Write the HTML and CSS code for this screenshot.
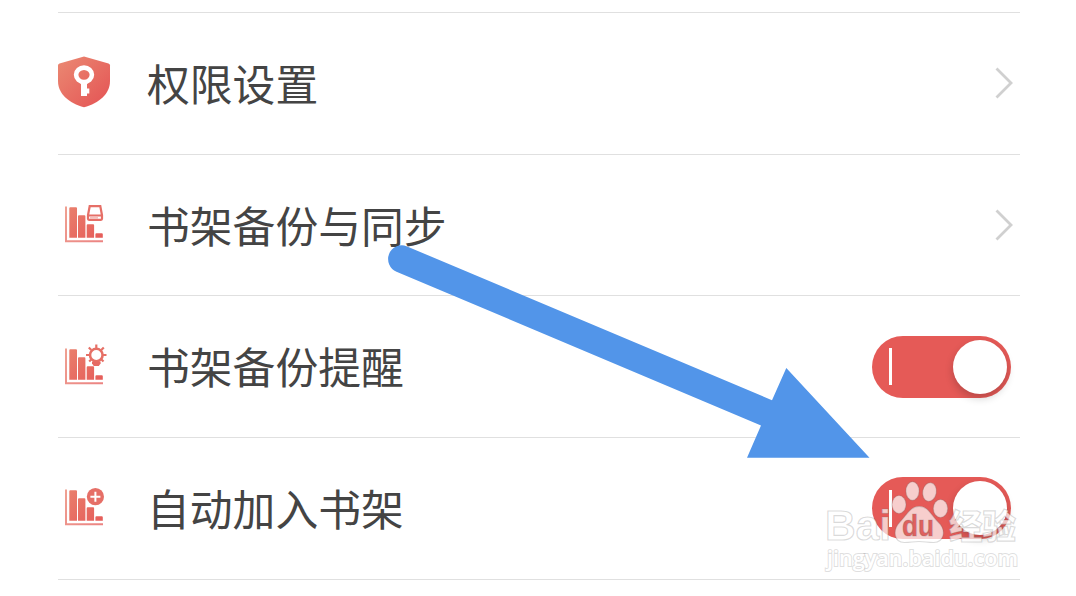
FILE: index.html
```html
<!DOCTYPE html>
<html lang="zh-CN">
<head>
    <meta charset="UTF-8">
    <meta name="viewport" content="width=device-width, initial-scale=1.0">
    <title>设置</title>
    <link rel="stylesheet" href="styles.css">
</head>
<body>

<svg class="defs" width="0" height="0">
    <defs>
        <linearGradient id="red" gradientUnits="userSpaceOnUse" x1="4" y1="4" x2="44" y2="44">
            <stop offset="0" stop-color="#ea8570"/>
            <stop offset="1" stop-color="#e55a58"/>
        </linearGradient>
        <g id="bars">
            <path d="M8 7.500V42.200H45" fill="none" stroke="url(#red)" stroke-width="2" opacity=".75"/>
            <path d="M12.300 8.200h5.700a1 1 0 0 1 1 1v29.500h-7.700V9.200a1 1 0 0 1 1-1zM21 16.300h5.400a1 1 0 0 1 1 1v21.400h-7.400V17.300a1 1 0 0 1 1-1zM29.700 25.200h5.400a1 1 0 0 1 1 1v12.500h-7.400V26.200a1 1 0 0 1 1-1zM38.400 34.200h5.400a1 1 0 0 1 1 1v3.500h-7.400v-3.500a1 1 0 0 1 1-1z" fill="url(#red)"/>
        </g>
    </defs>
</svg>

<div class="list">
    <div class="row">
        <svg class="icon" viewBox="0 0 52 52">
            <path d="M26-.5L50.500 6.500Q52 7 52 8.500V24C52 37 41 46 26 50.300 11 46 0 37 0 24V8.500Q0 7 1.500 6.500z" fill="url(#red)"/>
            <ellipse cx="26" cy="17.800" rx="7.900" ry="7.200" fill="none" stroke="#fff" stroke-width="4.600"/>
            <path d="M23 24h6v7.600h2.300v5h-2.300v2.400h-6z" fill="#fff"/>
        </svg>
        <span class="label">权限设置</span>
        <svg class="arrow" viewBox="0 0 18 32"><path d="M1.500 1.500L16 16 1.500 30.500"/></svg>
    </div>
    <div class="row">
        <svg class="icon" viewBox="0 0 52 52">
            <use href="#bars"/>
            <path d="M31.700 7.200h10.600l1.700 9v3.600a1 1 0 0 1-1 1H31a1 1 0 0 1-1-1v-3.600zM30.500 16.500h13" fill="none" stroke="#e66f67" stroke-width="2.200"/>
            <path d="M32 18.900h8" stroke="#f3b5b0" stroke-width="1.500"/>
        </svg>
        <span class="label">书架备份与同步</span>
        <svg class="arrow" viewBox="0 0 18 32"><path d="M1.500 1.500L16 16 1.500 30.500"/></svg>
    </div>
    <div class="row">
        <svg class="icon" viewBox="0 0 52 52">
            <use href="#bars"/>
            <circle cx="38.300" cy="14" r="6.300" fill="none" stroke="#e67066" stroke-width="2.600"/>
            <path d="M34 20.500h8.600v2l-1.800 2.500h-5l-1.800-2.500z" fill="#e66a63"/>
            <path d="M38.300 3.500v3.500M28 14h3.500M45 14h3.500M30.800 6.500l2.500 2.500M45.800 6.500l-2.500 2.500M31.200 20.500l2-2M45.500 20.500l-2-2" stroke="#e67066" stroke-width="2.200"/>
        </svg>
        <span class="label">书架备份提醒</span>
        <div class="switch"><i class="knob"></i></div>
    </div>
    <div class="row">
        <svg class="icon" viewBox="0 0 52 52">
            <use href="#bars"/>
            <circle cx="37.400" cy="14.700" r="8.600" fill="#e66f67"/>
            <path d="M37.400 9.700v10M32.400 14.700h10" stroke="#fff" stroke-width="2"/>
        </svg>
        <span class="label">自动加入书架</span>
        <div class="switch"><i class="knob"></i></div>
    </div>
</div>

<svg class="overlay" viewBox="0 0 1076 596">
    <path class="pointer" d="M406.500 246.200L772 400.200 786.300 368 869.500 457.700H747L761 425.500 396.500 271.700A13.700 13.700 0 0 1 406.500 246.200z"/>
    <g class="watermark">
        <text class="brand" x="825" y="540" textLength="66" lengthAdjust="spacingAndGlyphs">Bai</text>
        <ellipse cx="899" cy="504.500" rx="7" ry="9"/>
        <ellipse cx="912.500" cy="491" rx="6.600" ry="9.300"/>
        <ellipse cx="929.500" cy="492" rx="6.800" ry="9.300" transform="rotate(10 929.500 492)"/>
        <ellipse cx="940.500" cy="508.500" rx="7.200" ry="9"/>
        <path d="M919 506.300C928 506 931 515 938 522 947 530 944 543 933 542.500 928 542.500 924 541.500 919 541.500S910 542.500 905 542.500C894 543 892 530 900 522 907 515 910 506.500 919 506.300z"/>
        <text class="du" x="902" y="536" textLength="32" lengthAdjust="spacingAndGlyphs">du</text>
        <text class="cjk" x="949" y="539" textLength="67" lengthAdjust="spacingAndGlyphs">经验</text>
        <text class="url" x="827" y="566" textLength="191" lengthAdjust="spacingAndGlyphs">jingyan.baidu.com</text>
    </g>
</svg>

</body>
</html>
```
FILE: styles.css
```css
body {
    margin: 0;
    height: 596px;
    overflow: hidden;
    background-color: #fff;
    color: #444;
    font-family: "Noto Sans CJK SC", sans-serif;
}
.defs {
    position: absolute;
}
.list {
    margin: 12px 56px 0 58px;
    border-top: 1px solid #e0e0e0;
}
.row {
    display: flex;
    align-items: center;
    box-sizing: border-box;
    height: 141.7px;
    border-bottom: 1px solid #e0e0e0;
}
.icon {
    width: 52px;
    height: 52px;
    margin-right: 37px;
    overflow: visible;
}
.label {
    flex: 1;
    font-size: 42.8px;
    font-weight: 400;
    line-height: 60px;
    padding-bottom: 3px;
}
.arrow {
    width: 18px;
    height: 32px;
    margin-right: 7px;
}
.arrow path {
    fill: none;
    stroke: #d0d0d0;
    stroke-width: 2.8;
}
.switch {
    display: flex;
    align-items: center;
    justify-content: space-between;
    box-sizing: border-box;
    width: 139px;
    height: 62px;
    margin-right: 9.5px;
    padding: 0 3.5px 0 17px;
    border-radius: 31px;
    background-color: #e55a57;
}
.switch::before {
    content: "";
    width: 3.5px;
    height: 37px;
    background-color: #fff;
}
.knob {
    width: 54px;
    height: 54px;
    border-radius: 50%;
    background-color: #fff;
    box-shadow: 0 4px 9px rgba(0, 0, 0, 0.2);
}
.overlay {
    position: absolute;
    top: 0;
    left: 0;
    width: 1076px;
    height: 596px;
}
.pointer {
    fill: #5295e9;
}
.watermark {
    fill: rgba(255, 255, 255, 0.7);
    stroke: rgba(110, 110, 110, 0.25);
    stroke-width: 1.2;
}
.brand {
    font: bold 43px "Liberation Sans", sans-serif;
}
.watermark .du {
    font: bold 29px "Liberation Sans", sans-serif;
    fill: #e0605d;
}
.cjk {
    font: 900 34px "Noto Sans CJK SC", sans-serif;
}
/* white letters on top of a faint outline */
.url {
    font: 600 21px "Open Sans", sans-serif;
    fill: #fff;
    stroke: rgba(110, 110, 110, 0.22);
    stroke-width: 2;
    paint-order: stroke;
}
```
